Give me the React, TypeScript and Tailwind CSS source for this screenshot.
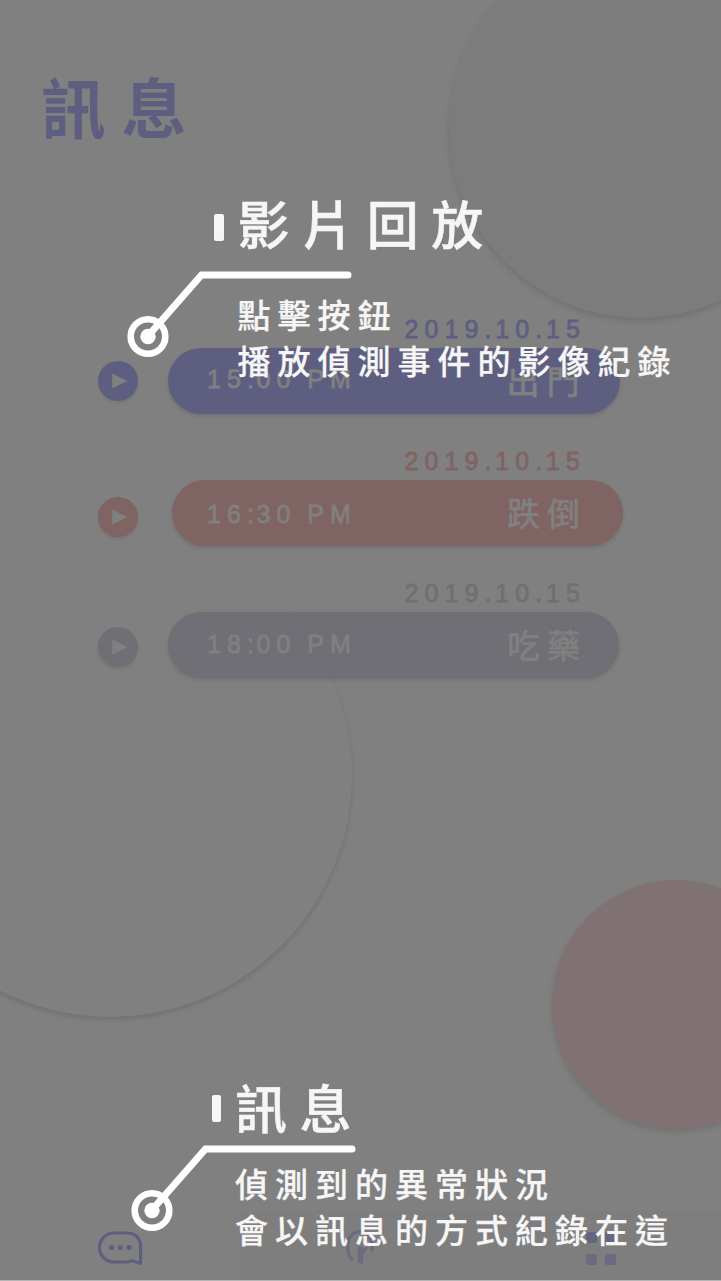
import React from "react";

const cjk = "font-['Noto_Sans_CJK_TC',sans-serif]";
const latin = "text-[25px] leading-[18px] tracking-[6.1px] whitespace-nowrap [-webkit-text-stroke:0.8px_currentColor]";

function Play({ className }: { className: string }) {
  return (
    <div className={`flex size-10 shrink-0 items-center justify-center rounded-full shadow-[0_2px_3px_rgba(0,0,0,0.08)] ${className}`}>
      <svg width="40" height="40" viewBox="0 0 40 40">
        <path d="M14.200 12.500 29.200 20 14.200 27.500Z" fill="#808080" />
      </svg>
    </div>
  );
}

type RecordProps = {
  hour: string;
  minute: string;
  label: string;
  text: string;
  fill: string;
  playClass: string;
  pillClass: string;
  timeClass: string;
  labelClass: string;
};

function RecordRow({ hour, minute, label, text, fill, playClass, pillClass, timeClass, labelClass }: RecordProps) {
  return (
    <article className="flex h-[132px] flex-col">
      <div className={`ml-[404.500px] h-[18px] ${latin} ${text}`}>
        2019<span className="tracking-[3.8px]">.</span>10<span className="tracking-[3.8px]">.</span>15
      </div>
      <div className="mt-[9.5px] flex items-start pl-[97.5px]">
        <Play className={`${fill} ${playClass}`} />
        <div className={`flex h-[66.5px] w-[451.5px] items-center justify-between rounded-full text-[#808080] shadow-[0_2px_4px_rgba(0,0,0,0.12)] ${fill} ${pillClass}`}>
          <span className={`${latin} ${timeClass}`}>
            {hour}<span className="tracking-[2.6px]">:</span>{minute}<span className="tracking-[3.8px]"> </span>PM
          </span>
          <span className={`text-[33px] leading-[48px] font-medium tracking-[7px] [-webkit-text-stroke:0.25px_currentColor] ${cjk} ${labelClass}`}>{label}</span>
        </div>
      </div>
    </article>
  );
}

function Target() {
  return (
    <svg className="shrink-0" width="230" height="96" viewBox="0 0 230 96" fill="none">
      <path d="M21 69 74.500 8H221" stroke="#fff" strokeWidth="7" strokeLinecap="round" />
      <circle cx="21" cy="69.5" r="17.3" stroke="#fff" strokeWidth="6.6" />
      <circle cx="21" cy="69.5" r="7.7" fill="#fff" />
    </svg>
  );
}

type HintProps = {
  title: string;
  lines: string[];
  className: string;
  headClass: string;
  titleClass: string;
  bodyClass: string;
  textClass: string;
};

function Hint({ title, lines, className, headClass, titleClass, bodyClass, textClass }: HintProps) {
  return (
    <section className={`flex flex-col text-[#f6f6f6] ${className}`}>
      <div className={`flex h-[60px] items-start ${headClass}`}>
        <span className="mt-[17px] h-[27px] w-[9.5px] shrink-0 rounded-[2px] bg-[#f6f6f6]" />
        <h2 className={`text-[52px] leading-[60px] font-medium tracking-[12.6px] whitespace-nowrap [-webkit-text-stroke:0.5px_currentColor] ${cjk} ${titleClass}`}>{title}</h2>
      </div>
      <div className={`flex h-[96px] ${bodyClass}`}>
        <Target />
        <div className={`text-[33px] font-medium tracking-[7px] whitespace-nowrap [-webkit-text-stroke:0.25px_currentColor] ${cjk} ${textClass}`}>
          {lines.map((line) => (
            <p key={line}>{line}</p>
          ))}
        </div>
      </div>
    </section>
  );
}

export default function App() {
  return (
    <main className="relative h-[1281px] w-[721px] overflow-hidden border-b border-[#b4b4b4] bg-[#808080] font-['Liberation_Sans',sans-serif]">
      <div className="absolute -top-[64px] left-[449px] size-[382px] rounded-full bg-[#7c7c7c] shadow-[0_3px_6px_rgba(0,0,0,0.12)]" />
      <div className="absolute top-[533px] -left-[132px] size-[484px] rounded-full bg-[#808080] shadow-[0_3px_5px_rgba(0,0,0,0.12)]" />
      <div className="absolute top-[880px] left-[552px] size-[249px] rounded-full bg-[#807272] shadow-[0_3px_6px_rgba(0,0,0,0.12)]" />

      <div className="relative flex h-[1280px] flex-col">
        <h1 className={`mt-[65px] ml-[41px] h-[81px] text-[65px] leading-[80px] font-bold tracking-[15.5px] text-[#5e5f80] ${cjk}`}>訊息</h1>
        <div className="mt-[174px] flex flex-col">
          <RecordRow hour="15" minute="00" label="出門" text="text-[#5e5f80]" fill="bg-[#5e5f80]"
            playClass="mt-[13.5px]" pillClass="ml-[30.5px] pr-[33px] pl-[39px]" timeClass="-mt-[3px]" labelClass="-mt-px" />
          <RecordRow hour="16" minute="30" label="跌倒" text="text-[#806363]" fill="bg-[#806363]"
            playClass="mt-[17.5px]" pillClass="ml-[34px] pr-[36px] pl-[35.5px]" timeClass="mt-[2px]" labelClass="-mt-px" />
          <RecordRow hour="18" minute="00" label="吃藥" text="text-[#706f75]" fill="bg-[#706f75]"
            playClass="mt-[15px]" pillClass="ml-[30px] pr-[32px] pl-[39.5px]" timeClass="-mt-[2px]" labelClass="-mt-px" />
        </div>
        <nav className="mt-auto grid h-[69px] grid-cols-[241px_240px_240px] text-[#5e5f80]">
          <div className="flex items-start pt-[17.5px] pl-[97px]">
            <svg width="47" height="38" viewBox="0 0 47 38" fill="none" stroke="currentColor" strokeWidth="3.2" strokeLinejoin="round">
              <path d="M17 4H30C38 4 43.5 9 43.5 17V34.5L35 31.5Q33 33 29 33H17A14.5 14.5 0 0 1 17 4Z" />
              <g fill="currentColor" stroke="none">
                <circle cx="14.5" cy="18.5" r="2.6" />
                <circle cx="23.3" cy="18.5" r="2.6" />
                <circle cx="32" cy="18.5" r="2.6" />
              </g>
            </svg>
          </div>
          <div className="flex items-start bg-[#7e7e7e] pt-[17px] pl-[104px]">
            <svg width="32" height="38" viewBox="0 0 32 38" fill="none" stroke="#6a6b80" strokeLinecap="round">
              <path d="M6.5 31Q3 27 3 21V15.5A12 12 0 0 1 27 15.5V22" strokeWidth="3.2" />
              <path d="M16 26 21 20.5" strokeWidth="3" />
              <path d="M15.5 33V21" strokeWidth="5.4" />
            </svg>
          </div>
          <div className="grid auto-rows-[11px] grid-cols-[11px_11px] gap-x-[7.5px] gap-y-[11px] bg-[#7e7e7e] pt-[21px] pl-[105px]">
            <i className="rounded-[2px] bg-[#64667f]" />
            <i className="rounded-[2px] bg-[#64667f]" />
            <i className="rounded-[2px] bg-[#6a6b80]" />
            <i className="rounded-[2px] bg-[#6a6b80]" />
          </div>
        </nav>
      </div>

      <div className="absolute inset-0 flex flex-col">
        <Hint className="mt-[197px] h-[190px]" headClass="pl-[214px]" titleClass="-mt-[4px] ml-[14px]" bodyClass="mt-[9.5px] pl-[127px]"
          textClass="-ml-[119.5px] pt-[24px] leading-[46.5px]" title="影片回放" lines={["點擊按鈕", "播放偵測事件的影像紀錄"]} />
        <Hint className="mt-[691px] h-[190px]" headClass="pl-[211.5px]" titleClass="-mt-px ml-[14px]" bodyClass="mt-[3px] pl-[131px]"
          textClass="-ml-[126px] pt-[19px] leading-[46px]" title="訊息" lines={["偵測到的異常狀況", "會以訊息的方式紀錄在這"]} />
      </div>
    </main>
  );
}
